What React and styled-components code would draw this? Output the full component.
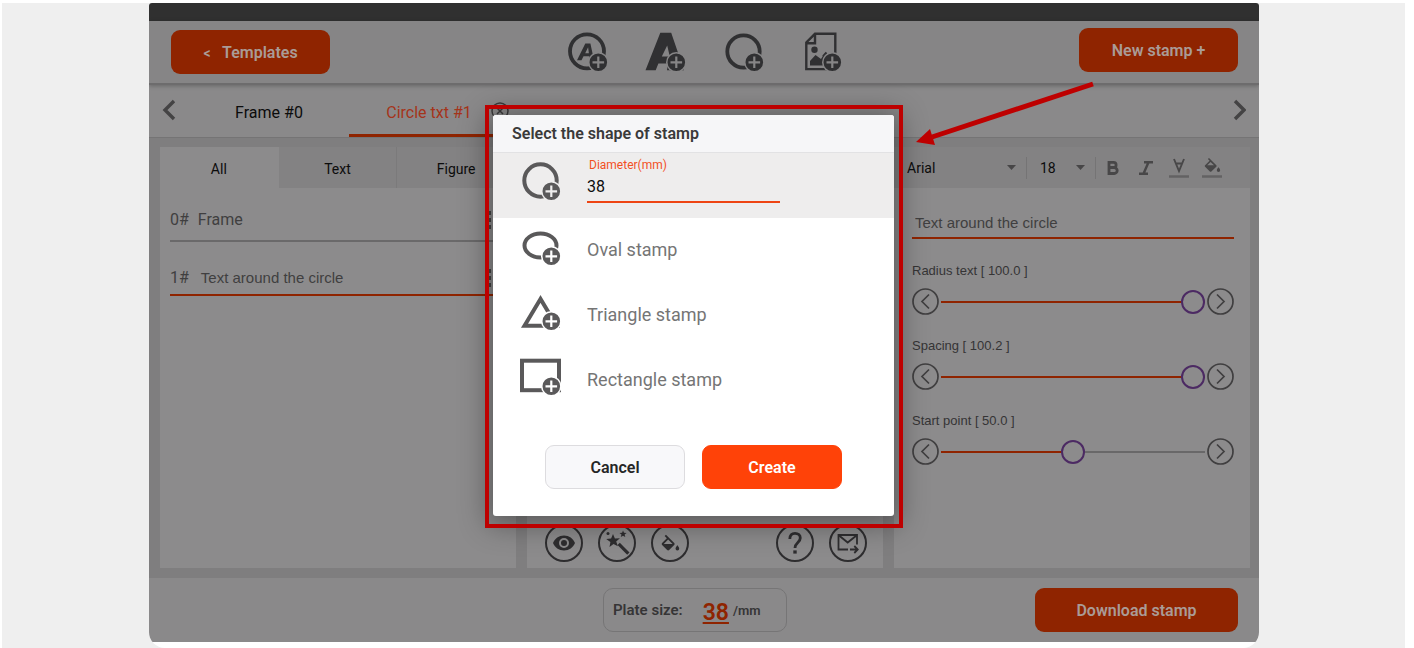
import React, { useState } from "react";

import styled, { createGlobalStyle } from 'styled-components'

const GlobalStyle = createGlobalStyle`
	* {
		box-sizing: border-box;
	}
	body {
		margin: 0;
		background: #fff;
		font-family: Roboto, "Liberation Sans", sans-serif;
		color: #111;
	}
	button, input, select {
		font-family: inherit;
		margin: 0;
	}
`

const StyledPage = styled.div`
	display: flex;
	min-height: 100vh;
	padding: 3px 9px 0 2px;
`
const StyledBand = styled.div`
	display: flex;
	flex: 1;
	padding: 0 146px 0 147px;
	background: #efefef;
`
const StyledCard = styled.main`
	position: relative;
	display: flex;
	flex-direction: column;
	flex: 1;
	min-width: 0;
	padding-bottom: 6px;
	border-radius: 3px 3px 16px 16px;
	overflow: hidden;
	background: #fff;
`
const StyledTopBar = styled.div`
	height: 18px;
	background: #303030;
`
const StyledHeader = styled.header`
	display: grid;
	grid-template-columns: 1fr auto 1fr;
	align-items: center;
	height: 64px;
	padding: 0 21px 0 22px;
	background: #868586;
	border-bottom: 2px solid #6d6c6d;
	box-shadow: 0 1px 4px rgba(0, 0, 0, 0.25);
	z-index: 1;
`
const StyledHeaderEnd = styled.div`
	display: flex;
	justify-content: flex-end;
	padding-bottom: 4px;
`
const StyledMainButton = styled.button`
	width: ${({ wide }) => (wide ? '203px' : '159px')};
	height: 44px;
	padding: 0;
	border: 0;
	border-radius: 9px;
	background: #8f2400;
	color: #aa9b96;
	font-size: 16px;
	font-weight: 600;
	white-space: pre;
	cursor: pointer;
	span {
		font-size: 14px;
	}
`
const StyledTools = styled.div`
	display: flex;
	gap: 36px;
`
const StyledIconButton = styled.button`
	display: flex;
	align-items: center;
	justify-content: center;
	padding: 0;
	border: 0;
	background: none;
	color: inherit;
	cursor: pointer;
`
const StyledToolButton = styled(StyledIconButton)`
	color: #303032;
`

const StyledFrameTabs = styled.nav`
	display: flex;
	height: 53px;
	background: #8a898a;
	border-bottom: 1px solid #757475;
`
const StyledArrowButton = styled(StyledIconButton)`
	width: 40px;
	height: 50px;
	color: #444344;
	margin-left: ${({ end }) => (end ? 'auto' : '0')};
`
const StyledFrameTab = styled.button`
	position: relative;
	width: 160px;
	padding: 6px 0 0;
	border: 0;
	border-bottom: 3px solid ${({ active }) => (active ? '#8f2400' : 'transparent')};
	background: none;
	color: ${({ active }) => (active ? '#a5341a' : '#0c0c0c')};
	font-size: 16px;
	svg {
		position: absolute;
		top: 17px;
		right: 0;
		color: #3b3a3b;
	}
`

const StyledWorkspace = styled.div`
	display: grid;
	grid-template-columns: 1fr 1fr 1fr;
	gap: 11px;
	flex: 1;
	padding: 9px 9px 10px 11px;
	background: #7f7e7f;
`
const StyledPanel = styled.section`
	display: flex;
	flex-direction: column;
	min-width: 0;
	background: #8c8b8c;
`
const StyledFilterTabs = styled.div`
	display: grid;
	grid-template-columns: 1fr 1fr 1fr;
	height: 41px;
`
const StyledFilterTab = styled.button`
	padding: 3px 0 0;
	border: 0;
	border-right: 1px solid ${({ active }) => (active ? '#8c8b8c' : '#7b7a7b')};
	background: ${({ active }) => (active ? '#8c8b8c' : '#838283')};
	color: #0c0c0c;
	font-size: 14px;
`
const StyledLayers = styled.ul`
	margin: 0;
	padding: 0 10px;
	list-style: none;
`
const StyledLayer = styled.li`
	display: flex;
	align-items: flex-end;
	height: 54px;
	padding-bottom: ${({ active }) => (active ? '5px' : '9px')};
	border-bottom: 2px solid ${({ active }) => (active ? '#8f2400' : '#6a696a')};
	color: #403f40;
	font-size: 16px;
	line-height: 22px;
	button {
		height: 22px;
		margin-left: auto;
		padding-right: 14px;
	}
`
const StyledLayerName = styled.span`
	margin-left: ${({ arial }) => (arial ? '12px' : '9px')};
	font-family: ${({ arial }) => (arial ? '"Liberation Sans", sans-serif' : 'inherit')};
	font-size: ${({ arial }) => (arial ? '15px' : '16px')};
`

const StyledRoundTools = styled.div`
	display: flex;
	gap: 15px;
	margin-top: auto;
	padding: 6px 16px 6px 18px;
`
const StyledRoundButton = styled(StyledIconButton)`
	width: 38px;
	height: 38px;
	margin-left: ${({ push }) => (push ? 'auto' : '0')};
	border: 2px solid #2e2d2f;
	border-radius: 50%;
	color: #2e2d2f;
`

const StyledTextBar = styled.div`
	display: flex;
	align-items: center;
	height: 41px;
	background: #838283;
`
const StyledSelectBox = styled.label`
	position: relative;
	display: flex;
	align-items: center;
	flex: ${({ grow }) => (grow ? '0 1 133px' : '0 0 69px')};
	height: 22px;
	border-right: 1px solid #757475;
	svg {
		position: absolute;
		right: 10px;
		pointer-events: none;
	}
	select {
		width: 100%;
		height: 22px;
		padding: 0 0 0 13px;
		border: 0;
		appearance: none;
		background: none;
		color: #0c0c0c;
		font-size: 14px;
	}
`
const StyledStyleButton = styled(StyledIconButton)`
	width: 33px;
	height: 24px;
	color: #484748;
`
const StyledSettings = styled.div`
	padding: 22px 16px 0 18px;
	font-family: "Liberation Sans", sans-serif;
`
const StyledTextInput = styled.input`
	display: block;
	width: 100%;
	height: 29px;
	margin-bottom: 24px;
	padding: 0 0 3px 3px;
	border: 0;
	border-bottom: 2px solid #8f2400;
	outline: 0;
	background: none;
	color: #403f40;
	font-size: 15px;
`
const StyledSlider = styled.div`
	margin-bottom: 23px;
	label {
		display: block;
		margin-bottom: 9px;
		color: #353435;
		font-size: 13px;
		line-height: 16px;
	}
`
const StyledSliderRow = styled.div`
	display: flex;
	align-items: center;
	gap: 2px;
	color: #403f40;
`
const StyledRange = styled.input`
	flex: 1;
	min-width: 0;
	height: 24px;
	margin: 0;
	appearance: none;
	background: linear-gradient(to right, #8f2400 ${({ fill }) => fill}%, #696869 ${({ fill }) => fill}%) center / 100% 2px no-repeat;
	&::-webkit-slider-thumb {
		appearance: none;
		width: 24px;
		height: 24px;
		border: 2px solid #4c2a63;
		border-radius: 50%;
		background: #8c8b8c;
	}
`

const StyledFooter = styled.footer`
	display: grid;
	grid-template-columns: 1fr auto 1fr;
	align-items: center;
	height: 64px;
	padding: 0 21px 0 3px;
	background: #8a898a;
	button:last-child {
		justify-self: end;
	}
`
const StyledPlate = styled.div`
	grid-column: 2;
	display: flex;
	align-items: center;
	width: 184px;
	height: 44px;
	padding-left: 9px;
	border: 1px solid #767576;
	border-radius: 10px;
	color: #363536;
	font-size: 15px;
	font-weight: 600;
	button {
		margin: 4px 4px 0 20px;
		padding: 0;
		border: 0;
		background: none;
		color: #8f2400;
		font-size: 23px;
		font-weight: 600;
		text-decoration: underline;
	}
	small {
		font-size: 13px;
	}
`

const StyledOverlay = styled.div`
	position: absolute;
	inset: 0;
	display: flex;
	align-items: flex-start;
	justify-content: center;
	padding: 102px 20px 0 0;
	z-index: 2;
`
const StyledMark = styled.div`
	position: relative;
	width: 418px;
	padding: 10px 9px 12px 8px;
	&::after {
		content: "";
		position: absolute;
		inset: 0;
		border: 4px solid #be0000;
		pointer-events: none;
	}
`
const StyledDialog = styled.form`
	border-radius: 3px;
	background: #fff;
	box-shadow: 0 4px 28px 6px rgba(0, 0, 0, 0.35);
	overflow: clip;
	h2 {
		height: 38px;
		margin: 0;
		padding-left: 19px;
		border-bottom: 1px solid #e2e2e4;
		background: #f6f6f8;
		color: #3a3a3a;
		font-size: 16px;
		font-weight: 600;
		line-height: 38px;
	}
`
const StyledShapeRow = styled.div`
	display: flex;
	align-items: flex-start;
	gap: 25px;
	height: 65px;
	padding: ${({ active }) => (active ? '3px' : '7px')} 27px 0;
	background: ${({ active }) => (active ? '#eeeded' : '#fff')};
	color: #5a595a;
	svg {
		flex: none;
		margin-top: ${({ active }) => (active ? '4px' : '0')};
	}
`
const StyledShapeButton = styled.button`
	flex: 1;
	height: 48px;
	padding: 0;
	border: 0;
	background: none;
	color: #757575;
	font-size: 18px;
	text-align: left;
`
const StyledField = styled.div`
	width: 193px;
	label {
		display: block;
		padding-left: 2px;
		color: #f2501f;
		font-size: 12px;
		line-height: 18px;
	}
	input {
		display: block;
		width: 100%;
		height: 29px;
		padding: 0 0 3px;
		border: 0;
		border-bottom: 2px solid #ee4413;
		outline: 0;
		background: none;
		color: #0c0c0c;
		font-size: 16px;
	}
`
const StyledActions = styled.div`
	display: flex;
	justify-content: center;
	gap: 17px;
	padding: 32px 0 27px;
`
const StyledAction = styled.button`
	width: 140px;
	height: 44px;
	border: 1px solid ${({ primary }) => (primary ? '#ff4208' : '#dddcdf')};
	border-radius: 9px;
	background: ${({ primary }) => (primary ? '#ff4208' : '#f8f8fa')};
	color: ${({ primary }) => (primary ? '#fff' : '#262626')};
	font-size: 16px;
	font-weight: 600;
`
const StyledPointer = styled.svg`
	position: absolute;
	top: 77px;
	right: 162px;
	z-index: 3;
	pointer-events: none;
`

// shapes share a round "add" badge in the lower right corner
const AddIcon = ({ id, shape, weight }) => (
	<svg width="42" height="42" viewBox="0 0 42 42" aria-hidden="true">
		<mask id={id} maskUnits="userSpaceOnUse" x="0" y="0" width="42" height="42">
			<rect width="42" height="42" fill="#fff" />
			<circle cx="31.3" cy="31.3" r="10.3" fill="#000" />
		</mask>
		<g mask={`url(#${id})`} fill="none" stroke="currentColor" strokeWidth={weight}>
			{shape === 'circle' && <circle cx="20.5" cy="20.5" r="16.2" />}
			{shape === 'oval' && <ellipse cx="20.5" cy="20.5" rx="16" ry="12" />}
			{shape === 'triangle' && <path d="M20.5 9 4.5 35.7h32z" />}
			{shape === 'rect' && <rect x="2" y="5.7" width="37" height="29.5" />}
			{shape === 'circleText' && (
				<>
					<circle cx="20" cy="20.3" r="17" />
					<path d="M10 29.3 18.3 12.5h5.1L27 29.3h-4l-.6-4h-5.900l-2 4zm8.200-7h3.700l-.8-6z" fill="currentColor" fillRule="evenodd" stroke="none" />
				</>
			)}
			{shape === 'text' && (
				<path d="M.5 39.2 15.3 1.8h10.900l12.800 37.400H22l1-6.600H13.400l-2.700 6.600zM16.8 25.500h8l-2.600-11z" fill="currentColor" fillRule="evenodd" stroke="none" />
			)}
			{shape === 'image' && (
				<>
					<path d="M14 2.8h20.3v35.3H5.3V11.5z" strokeWidth="2.4" />
					<path d="M14 3v9.3H5.3" strokeWidth="2.4" />
					<circle cx="13.5" cy="18.8" r="3.2" fill="currentColor" stroke="none" />
					<path d="M9 34.5V30l5.5-6 5.500 4 3.500-5.500 2 1.500v10.500z" fill="currentColor" stroke="none" />
					<path d="M22 25.5l3.500-4" strokeWidth="2" />
				</>
			)}
		</g>
		<path
			fill="currentColor"
			fillRule="evenodd"
			d="M31.3 22.5a8.8 8.8 0 1 1 0 17.6a8.8 8.8 0 1 1 0-17.6zM30.2 25.5v4.7h-4.7v2.2h4.7v4.7h2.2v-4.7h4.7v-2.2h-4.7v-4.7z"
		/>
	</svg>
)

const Chevron = ({ right }) => (
	<svg width="14" height="22" viewBox="0 0 14 22" fill="none" stroke="currentColor" strokeWidth="3.4" aria-hidden="true">
		<path d={right ? 'M3 2l9 9-9 9' : 'M12 2l-9 9 9 9'} />
	</svg>
)

const RoundChevron = ({ right }) => (
	<svg width="27" height="27" viewBox="0 0 27 27" fill="none" stroke="currentColor" strokeWidth="1.7" aria-hidden="true">
		<circle cx="13.5" cy="13.5" r="12.5" />
		<path d={right ? 'M10 6.5l7 7-7 7' : 'M17 6.5l-7 7 7 7'} />
	</svg>
)

const Caret = () => (
	<svg width="9" height="5" viewBox="0 0 9 5" aria-hidden="true"><path d="M0 0h9L4.5 5z" fill="#474647" /></svg>
)

const Dots = () => (
	<svg width="4" height="20" viewBox="0 0 4 20" fill="#444" aria-hidden="true">
		<rect x="0" y="1" width="3" height="4" />
		<rect x="0" y="8" width="3" height="4" />
		<rect x="0" y="15" width="3" height="4" />
	</svg>
)

const EyeIcon = () => (
	<svg width="24" height="24" viewBox="0 0 24 24" aria-hidden="true">
		<path fill="currentColor" fillRule="evenodd" d="M12 4.5C7 4.5 2.7 7.6 1 12c1.7 4.4 6 7.5 11 7.5s9.3-3.1 11-7.5C21.3 7.6 17 4.5 12 4.5zM12 17a5 5 0 1 1 0-10a5 5 0 0 1 0 10zm0-8a3 3 0 1 0 0 6a3 3 0 0 0 0-6z" />
	</svg>
)

const WandIcon = () => (
	<svg width="28" height="28" viewBox="0 0 28 28" fill="currentColor" aria-hidden="true">
		<path d="M10 5l1.9 4.5 5-.2-3.7 3.3 1.7 4.6-4.4-2.3-4 3 .9-4.9L3.2 10l4.9-.6z" />
		<path d="M20 1.5l1 2.3 2.6.1-2 1.7.7 2.500L20 6.800l-2.200 1.300.7-2.500-2-1.700 2.600-.1z" />
		<circle cx="5" cy="4.5" r="1.5" />
		<path d="M14.5 16l2.3-2.3 9.700 9.800-2.300 2.300z" />
	</svg>
)

const BucketIcon = () => (
	<svg width="24" height="24" viewBox="-1 -4 26 26" fill="currentColor" aria-hidden="true">
		<path fillRule="evenodd" d="M16.56 8.94L7.62 0 6.21 1.41l2.38 2.38-5.15 5.15a1.5 1.5 0 0 0 0 2.12l5.5 5.5c.3.3.68.44 1.06.44s.77-.15 1.06-.44l5.5-5.5c.59-.58.59-1.53 0-2.12zM5.21 10L10 5.21 14.79 10zM20 11.5s-2 2.17-2 3.5a2 2 0 0 0 4 0c0-1.33-2-3.5-2-3.5z" />
	</svg>
)

const HelpIcon = () => (
	<svg width="24" height="26" viewBox="0 0 24 26" fill="none" stroke="currentColor" strokeWidth="2.8" aria-hidden="true">
		<path d="M6.8 9c0-3.8 2-5.7 5.2-5.7s5.300 1.900 5.300 4.700c0 4.500-5.300 4.500-5.300 10" />
		<path d="M10.3 22h3.4" strokeWidth="3.2" />
	</svg>
)

const MailIcon = () => (
	<svg width="24" height="24" viewBox="0 0 24 24" fill="none" stroke="currentColor" strokeWidth="1.8" aria-hidden="true">
		<path d="M12 18.5H2.5V4H21v9.5" />
		<path d="M3 4.5l8.7 7 8.800-7" />
		<path d="M14 18.5h7.500M18.300 15l3.400 3.500-3.400 3.500" />
	</svg>
)

const Slider = ({ id, name, initial, max }) => {
	const [value, setValue] = useState(initial)
	const fill = Math.min(100, (value / max) * 100)

	return (
		<StyledSlider>
			<label htmlFor={id}>{name} [ {value.toFixed(1)} ]</label>
			<StyledSliderRow>
				<StyledIconButton type="button" aria-label={`Decrease ${name}`} onClick={() => setValue(Math.max(0, value - 1))}>
					<RoundChevron />
				</StyledIconButton>
				<StyledRange id={id} type="range" min="0" max={max} step="0.1" value={value} fill={fill} onChange={(e) => setValue(Number(e.target.value))} />
				<StyledIconButton type="button" aria-label={`Increase ${name}`} onClick={() => setValue(Math.min(max, value + 1))}>
					<RoundChevron right />
				</StyledIconButton>
			</StyledSliderRow>
		</StyledSlider>
	)
}

const tools = [
	{ shape: 'circleText', label: 'Add circle text' },
	{ shape: 'text', label: 'Add text' },
	{ shape: 'circle', label: 'Add frame' },
	{ shape: 'image', label: 'Add image' },
]

const shapes = [
	{ shape: 'oval', label: 'Oval stamp' },
	{ shape: 'triangle', label: 'Triangle stamp' },
	{ shape: 'rect', label: 'Rectangle stamp' },
]

const LayersPanel = () => (
	<StyledPanel>
		<StyledFilterTabs>
			{['All', 'Text', 'Figure'].map((name, index) => (
				<StyledFilterTab type="button" key={name} active={index === 0}>{name}</StyledFilterTab>
			))}
		</StyledFilterTabs>
		<StyledLayers>
			<StyledLayer>
				0#<StyledLayerName>Frame</StyledLayerName>
				<StyledIconButton type="button" aria-label="Frame options"><Dots /></StyledIconButton>
			</StyledLayer>
			<StyledLayer active>
				1#<StyledLayerName arial>Text around the circle</StyledLayerName>
				<StyledIconButton type="button" aria-label="Text options"><Dots /></StyledIconButton>
			</StyledLayer>
		</StyledLayers>
	</StyledPanel>
)

const PreviewPanel = () => (
	<StyledPanel>
		<StyledRoundTools>
			<StyledRoundButton type="button" aria-label="Preview"><EyeIcon /></StyledRoundButton>
			<StyledRoundButton type="button" aria-label="Effects"><WandIcon /></StyledRoundButton>
			<StyledRoundButton type="button" aria-label="Fill"><BucketIcon /></StyledRoundButton>
			<StyledRoundButton type="button" aria-label="Help" push><HelpIcon /></StyledRoundButton>
			<StyledRoundButton type="button" aria-label="Send"><MailIcon /></StyledRoundButton>
		</StyledRoundTools>
	</StyledPanel>
)

const SettingsPanel = () => (
	<StyledPanel>
		<StyledTextBar>
			<StyledSelectBox grow>
				<select aria-label="Font" defaultValue="Arial"><option>Arial</option></select>
				<Caret />
			</StyledSelectBox>
			<StyledSelectBox>
				<select aria-label="Font size" defaultValue="18"><option>18</option></select>
				<Caret />
			</StyledSelectBox>
			<StyledStyleButton type="button" aria-label="Bold">
				<svg width="14" height="16" viewBox="0 0 14 16" fill="none" stroke="currentColor" strokeWidth="2.8">
					<path d="M3 2.3h4.5a2.6 2.6 0 0 1 0 5.2H3zM3 7.500h5.200a3 3 0 0 1 0 6H3z" />
				</svg>
			</StyledStyleButton>
			<StyledStyleButton type="button" aria-label="Italic">
				<svg width="14" height="16" viewBox="0 0 14 16" fill="none" stroke="currentColor" strokeWidth="2.4">
					<path d="M5 2.2h9M0 13.8h9M9.5 2.2l-5 11.6" />
				</svg>
			</StyledStyleButton>
			<StyledStyleButton type="button" aria-label="Text color">
				<svg width="20" height="22" viewBox="0 0 20 22" fill="none" stroke="currentColor" strokeWidth="1.9">
					<path d="M5 2l5 12 5-12M6.8 6.500h6.400" />
					<path d="M0 19.5h20" stroke="#636263" strokeWidth="2.6" />
				</svg>
			</StyledStyleButton>
			<StyledStyleButton type="button" aria-label="Background color">
				<svg width="20" height="22" viewBox="0 0 20 22" fill="currentColor">
					<path fillRule="evenodd" d="M14.3 8.3 7 1 5.9 2.1l1.7 1.7-4.5 4.5a1 1 0 0 0 0 1.5l4.5 4.5a1.4 1.4 0 0 0 2 0l4.700-4.500a1 1 0 0 0 0-1.500zM5.200 8.300 8.600 5l3.400 3.300zM16.500 10.200s-1.700 1.900-1.700 3a1.700 1.700 0 0 0 3.400 0c0-1.100-1.700-3-1.700-3z" />
					<path d="M0 18.2h20v2.6H0z" fill="#636263" />
				</svg>
			</StyledStyleButton>
		</StyledTextBar>
		<StyledSettings>
			<StyledTextInput aria-label="Text" defaultValue="Text around the circle" />
			<Slider id="radius" name="Radius text" initial={100} max={100} />
			<Slider id="spacing" name="Spacing" initial={100.2} max={100.2} />
			<Slider id="start" name="Start point" initial={50} max={100} />
		</StyledSettings>
	</StyledPanel>
)

const ShapeDialog = ({ size, setSize }) => (
	<StyledOverlay>
		<StyledMark>
			<StyledDialog role="dialog" aria-labelledby="dialog-title" onSubmit={(e) => e.preventDefault()}>
				<h2 id="dialog-title">Select the shape of stamp</h2>
				<StyledShapeRow active>
					<AddIcon id="stamp-circle" shape="circle" weight="4" />
					<StyledField>
						<label htmlFor="diameter">Diameter(mm)</label>
						<input id="diameter" value={size} onChange={(e) => setSize(e.target.value)} />
					</StyledField>
				</StyledShapeRow>
				{shapes.map((item) => (
					<StyledShapeRow key={item.shape}>
						<AddIcon id={`stamp-${item.shape}`} shape={item.shape} weight="4" />
						<StyledShapeButton type="button">{item.label}</StyledShapeButton>
					</StyledShapeRow>
				))}
				<StyledActions>
					<StyledAction type="button">Cancel</StyledAction>
					<StyledAction type="submit" primary>Create</StyledAction>
				</StyledActions>
			</StyledDialog>
		</StyledMark>
	</StyledOverlay>
)

const App = () => {
	const [size, setSize] = useState('38')

	return (
		<StyledPage>
			<GlobalStyle />
			<StyledBand>
				<StyledCard>
					<StyledTopBar />
					<StyledHeader>
						<StyledMainButton type="button"><span>&lt;</span>{'   Templates'}</StyledMainButton>
						<StyledTools>
							{tools.map((item) => (
								<StyledToolButton type="button" key={item.shape} aria-label={item.label}>
									<AddIcon id={`tool-${item.shape}`} shape={item.shape} weight="3.8" />
								</StyledToolButton>
							))}
						</StyledTools>
						<StyledHeaderEnd>
							<StyledMainButton type="button">New stamp +</StyledMainButton>
						</StyledHeaderEnd>
					</StyledHeader>
					<StyledFrameTabs>
						<StyledArrowButton type="button" aria-label="Previous"><Chevron /></StyledArrowButton>
						<StyledFrameTab type="button">Frame #0</StyledFrameTab>
						<StyledFrameTab type="button" active>
							Circle txt #1
							<svg width="18" height="18" viewBox="0 0 18 18" fill="none" stroke="currentColor" strokeWidth="1.5" aria-hidden="true">
								<circle cx="9" cy="9" r="8" />
								<path d="M6 6l6 6M12 6l-6 6" />
							</svg>
						</StyledFrameTab>
						<StyledArrowButton type="button" aria-label="Next" end><Chevron right /></StyledArrowButton>
					</StyledFrameTabs>
					<StyledWorkspace>
						<LayersPanel />
						<PreviewPanel />
						<SettingsPanel />
					</StyledWorkspace>
					<StyledFooter>
						<StyledPlate>
							Plate size:
							<button type="button">{size}</button>
							<small>/mm</small>
						</StyledPlate>
						<StyledMainButton type="button" wide>Download stamp</StyledMainButton>
					</StyledFooter>
					<ShapeDialog size={size} setSize={setSize} />
					<StyledPointer width="185" height="70" viewBox="0 0 185 70" aria-hidden="true">
						<path d="M181 4 20 57" stroke="#be0000" strokeWidth="5" />
						<path d="M4 62 18 49l5 16z" fill="#be0000" />
					</StyledPointer>
				</StyledCard>
			</StyledBand>
		</StyledPage>
	)
}
export default App
